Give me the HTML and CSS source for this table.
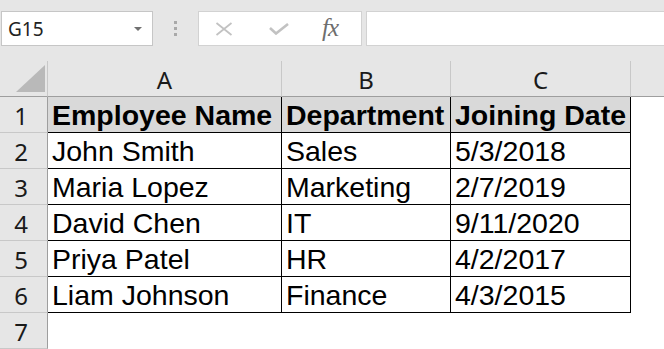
FILE: index.html
```html
<!DOCTYPE html>
<html>
<head>
<meta charset="utf-8">
<link rel="stylesheet" href="styles.css">
</head>
<body>
<div class="app">
  <div class="fbar">
    <div class="namebox"><span class="nb-text">G15</span><span class="nb-arrow"></span></div>
    <div class="dots"><i></i><i></i><i></i></div>
    <div class="fxbox">
      <svg class="ico" width="18" height="14" viewBox="0 0 18 14"><path d="M1.5 1 L16.5 13 M16.5 1 L1.5 13" stroke="#c2c2c2" stroke-width="1.8" fill="none"/></svg>
      <svg class="ico" width="20" height="12" viewBox="0 0 20 12"><path d="M1 5 L7 10.5 L19 1" stroke="#c2c2c2" stroke-width="2.6" fill="none"/></svg>
      <span class="fx">fx</span>
    </div>
    <div class="finput"></div>
  </div>
  <div class="sheet">
    <div class="corner"><svg width="48" height="35" viewBox="0 0 48 35"><polygon points="45,4 45,31 16,31" fill="#b9b9b9"/></svg></div>
    <div class="ch">A</div>
    <div class="ch">B</div>
    <div class="ch">C</div>
    <div class="ch rest"></div>

    <div class="rh">1</div>
    <div class="c hd">Employee Name</div>
    <div class="c hd">Department</div>
    <div class="c hd">Joining Date</div>
    <div class="e"></div>

    <div class="rh">2</div>
    <div class="c">John Smith</div>
    <div class="c">Sales</div>
    <div class="c">5/3/2018</div>
    <div class="e"></div>

    <div class="rh">3</div>
    <div class="c">Maria Lopez</div>
    <div class="c">Marketing</div>
    <div class="c">2/7/2019</div>
    <div class="e"></div>

    <div class="rh">4</div>
    <div class="c">David Chen</div>
    <div class="c">IT</div>
    <div class="c">9/11/2020</div>
    <div class="e"></div>

    <div class="rh">5</div>
    <div class="c">Priya Patel</div>
    <div class="c">HR</div>
    <div class="c">4/2/2017</div>
    <div class="e"></div>

    <div class="rh">6</div>
    <div class="c">Liam Johnson</div>
    <div class="c">Finance</div>
    <div class="c">4/3/2015</div>
    <div class="e"></div>

    <div class="rh">7</div>
    <div class="e"></div>
    <div class="e"></div>
    <div class="e"></div>
    <div class="e"></div>
  </div>
</div>
</body>
</html>
```
FILE: styles.css
```css
* { box-sizing: border-box; }
html, body { margin: 0; padding: 0; }
body { width: 664px; height: 349px; overflow: hidden; background: #ffffff; }
.app { width: 664px; }

.fbar {
  height: 61px;
  background: #e6e6e6;
  display: flex;
  align-items: flex-start;
  padding: 11px 0 0 1px;
}
.namebox {
  width: 152px;
  height: 35px;
  background: #fff;
  border: 1px solid #c6c6c6;
  display: flex;
  align-items: center;
  justify-content: space-between;
  padding: 0 10px 0 6px;
}
.nb-text {
  font-family: "Noto Sans", "Open Sans", sans-serif;
  font-size: 19px;
  color: #222;
}
.nb-arrow {
  width: 0; height: 0;
  border-left: 4px solid transparent;
  border-right: 4px solid transparent;
  border-top: 4px solid #707070;
  margin-top: 1px;
}
.dots {
  width: 45px;
  height: 35px;
  display: flex;
  flex-direction: column;
  align-items: center;
  justify-content: center;
  gap: 3px;
}
.dots i { display: block; width: 3px; height: 3px; background: #a9a9a9; }
.fxbox {
  width: 164px;
  height: 35px;
  background: #fff;
  border: 1px solid #d2d2d2;
  display: flex;
  align-items: center;
  padding: 0 0 0 16px;
  gap: 36px;
}
.fxbox .ico { display: block; }
.fx {
  font-family: "Liberation Serif", "DejaVu Serif", serif;
  font-style: italic;
  font-size: 25px;
  color: #6e6e6e;
  margin-left: -3px;
  letter-spacing: -1px;
  line-height: 1;
  margin-top: -2px;
}
.finput {
  flex: 1;
  height: 35px;
  margin-left: 4px;
  margin-right: -3px;
  background: #fff;
  border: 1px solid #d2d2d2;
}

.sheet {
  display: grid;
  grid-template-columns: 48px 234px 169px 180px 1fr;
  grid-auto-rows: 36px;
}
.corner {
  background: #e6e6e6;
  border-right: 1px solid #c8c8c8;
  border-bottom: 1px solid #9e9e9e;
}
.corner svg { display: block; }
.ch {
  background: #e6e6e6;
  border-right: 1px solid #c8c8c8;
  border-bottom: 1px solid #9e9e9e;
  font-family: "Noto Sans", "Open Sans", sans-serif;
  font-size: 24px;
  line-height: 35px;
  padding-top: 1px;
  text-align: center;
  color: #1a1a1a;
}
.ch.rest { border-right: none; }
.rh {
  background: #e6e6e6;
  border-right: 1px solid #9e9e9e;
  border-bottom: 1px solid #c8c8c8;
  font-family: "Noto Sans", "Open Sans", sans-serif;
  font-size: 24px;
  line-height: 35px;
  padding: 1px 5px 0 0;
  text-align: center;
  color: #1a1a1a;
}
.c {
  border-right: 1px solid #000;
  border-bottom: 1px solid #000;
  font-family: "Liberation Sans", Arial, sans-serif;
  font-size: 28.5px;
  line-height: 35px;
  padding: 1px 0 0 4px;
  color: #000;
  white-space: nowrap;
  overflow: hidden;
}
.c.hd { font-weight: bold; background: #d9d9d9; }
.e { background: #fff; }
```
